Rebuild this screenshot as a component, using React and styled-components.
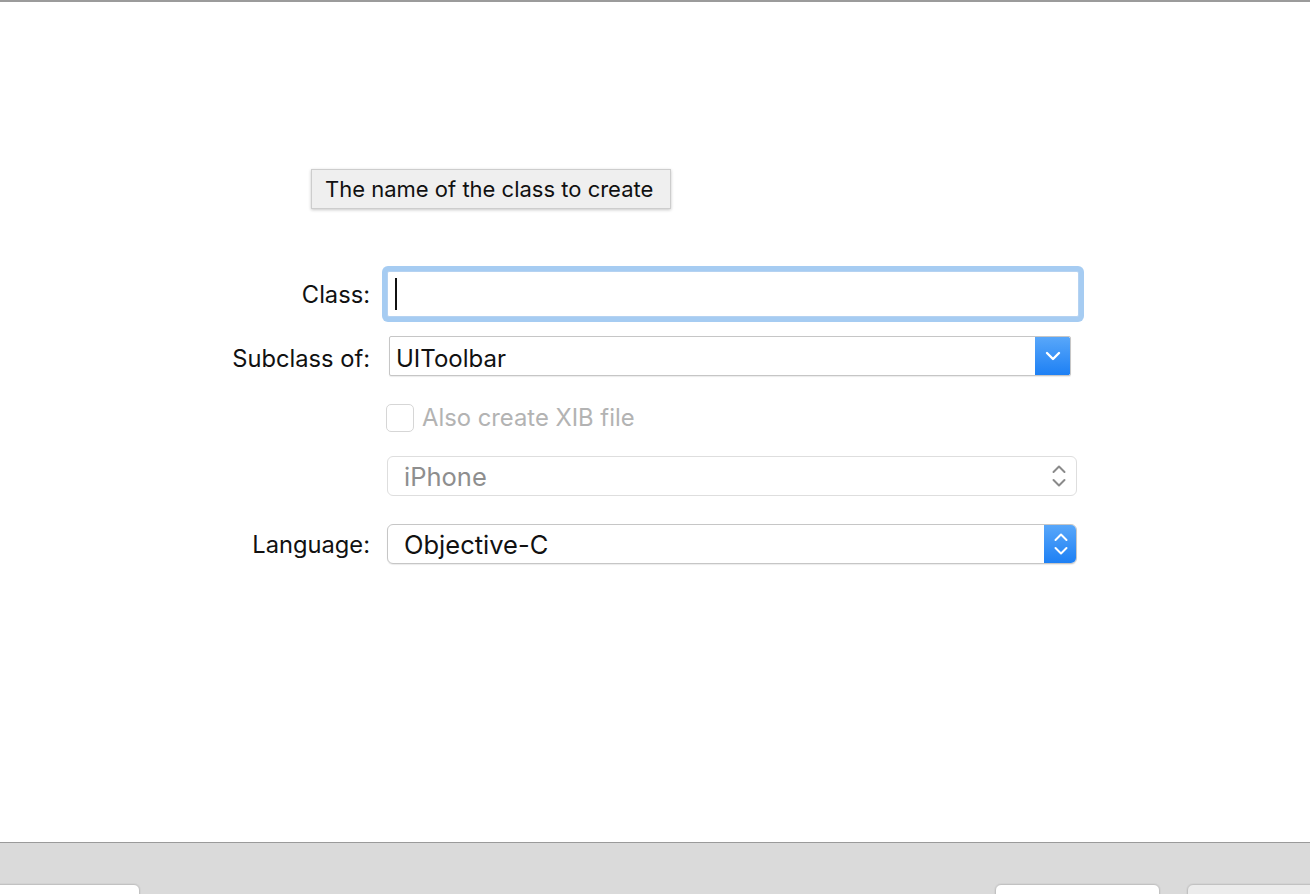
import React from "react";
import styled, { createGlobalStyle } from "styled-components";

const Global = createGlobalStyle`
  html, body { margin: 0; padding: 0; background: #fff; }
  body { font-family: Inter, "Helvetica Neue", "Liberation Sans", sans-serif; -webkit-font-smoothing: antialiased; }
  * { box-sizing: border-box; }
`;

const Page = styled.div`
  width: 1310px;
  height: 894px;
  display: flex;
  flex-direction: column;
  border-top: 2px solid #9b9b9b;
  overflow: hidden;
`;

const Main = styled.div`
  position: relative;
  flex: 1;
  padding-top: 264px;
  display: flex;
  flex-direction: column;
`;

const Tooltip = styled.div`
  position: absolute;
  left: 311px;
  top: 167px;
  width: 360px;
  height: 40px;
  background: #efefef;
  border: 1px solid #cdcdcd;
  box-shadow: 0 1px 3px rgba(0, 0, 0, 0.22);
  display: flex;
  align-items: center;
  padding-left: 13px;
  font-size: 22px;
  color: #111;
`;

const Row = styled.div`
  display: grid;
  grid-template-columns: 370px auto;
  align-items: center;
  margin-top: ${(p) => p.$mt || 0}px;
  height: ${(p) => p.$h}px;
`;

const Label = styled.label`
  text-align: right;
  font-size: 23.7px;
  color: #111;
  padding-top: ${(p) => p.$dy || 0}px;
`;

const Cell = styled.div`
  padding-left: ${(p) => p.$pl}px;
  display: flex;
  align-items: center;
`;

const TextField = styled.div`
  width: 692px;
  height: 46px;
  border: 1px solid #b5d2f1;
  border-radius: 2px;
  background: #fff;
  box-shadow: 0 0 0 5px #a6ccf2;
  display: flex;
  align-items: center;
  padding-left: 7px;
`;

const Caret = styled.span`
  display: block;
  width: 2px;
  height: 32px;
  background: #111;
`;

const Combo = styled.div`
  width: ${(p) => p.$w}px;
  height: 40px;
  display: flex;
  align-items: stretch;
  border: 1px solid ${(p) => (p.$disabled ? "#dedede" : "#c6c6c6")};
  border-radius: ${(p) => p.$radius}px;
  background: #fff;
  box-shadow: ${(p) => (p.$disabled ? "none" : "0 1px 1px rgba(0,0,0,0.08)")};
  overflow: hidden;
`;

const ComboText = styled.div`
  flex: 1;
  display: flex;
  align-items: center;
  padding-left: ${(p) => p.$pl}px;
  padding-top: ${(p) => p.$dy || 0}px;
  font-size: ${(p) => p.$fs}px;
  color: ${(p) => (p.$disabled ? "#8e8e8e" : "#111")};
`;

const BlueButton = styled.div`
  width: ${(p) => p.$w}px;
  margin: -1px -1px -1px 0;
  background: linear-gradient(#5aa8fa, #1c7ff4);
  border-radius: 0 ${(p) => p.$r}px ${(p) => p.$r}px 0;
  display: flex;
  align-items: center;
  justify-content: center;
`;

const GrayArrows = styled.div`
  width: 34px;
  display: flex;
  align-items: center;
  justify-content: center;
`;

const Check = styled.span`
  width: 28px;
  height: 28px;
  border: 1px solid #d6d6d6;
  border-radius: 5px;
  background: #fff;
  display: block;
`;

const CheckText = styled.span`
  margin-left: 8px;
  font-size: 23.8px;
  color: #b3b3b3;
`;

const Footer = styled.div`
  height: 52px;
  border-top: 1px solid #9a9a9a;
  background: #dadada;
  display: flex;
  justify-content: space-between;
  align-items: flex-start;
  padding-top: 41px;
  overflow: hidden;
`;

const FooterGroup = styled.div`
  display: flex;
  gap: 27px;
  margin-right: ${(p) => p.$mr || 0}px;
  margin-left: ${(p) => p.$ml || 0}px;
`;

const FooterButton = styled.div`
  width: ${(p) => p.$w}px;
  height: 30px;
  border-radius: 6px;
  border: 1px solid #c2c2c2;
  background: ${(p) => (p.$gray ? "#ececec" : "#fff")};
  box-shadow: 0 0 0 1px rgba(0,0,0,0.03);
`;

const ChevronDown = () => (
  <svg width="16" height="10" viewBox="0 0 16 10">
    <path d="M2 2 L8 8 L14 2" fill="none" stroke="#fff" strokeWidth="2.4" strokeLinecap="round" strokeLinejoin="round" />
  </svg>
);

const UpDown = ({ color }) => (
  <svg width="16" height="26" viewBox="0 0 16 26">
    <path d="M2.5 9 L8 3.5 L13.5 9" fill="none" stroke={color} strokeWidth="2" strokeLinecap="round" strokeLinejoin="round" />
    <path d="M2.5 17 L8 22.5 L13.5 17" fill="none" stroke={color} strokeWidth="2" strokeLinecap="round" strokeLinejoin="round" />
  </svg>
);

export default function App() {
  return (
    <>
      <Global />
      <Page>
        <Main>
          <Tooltip>The name of the class to create</Tooltip>
          <Row $h={56}>
            <Label>Class:</Label>
            <Cell $pl={17}>
              <TextField>
                <Caret />
              </TextField>
            </Cell>
          </Row>
          <Row $h={40} $mt={14}>
            <Label $dy={5}>Subclass of:</Label>
            <Cell $pl={19}>
              <Combo $w={682} $radius={2}>
                <ComboText $pl={6} $fs={24} $dy={4}>UIToolbar</ComboText>
                <BlueButton $w={36} $r={5}>
                  <ChevronDown />
                </BlueButton>
              </Combo>
            </Cell>
          </Row>
          <Row $h={28} $mt={27}>
            <span />
            <Cell $pl={16}>
              <Check />
              <CheckText>Also create XIB file</CheckText>
            </Cell>
          </Row>
          <Row $h={40} $mt={25}>
            <span />
            <Cell $pl={17}>
              <Combo $w={690} $radius={6} $disabled>
                <ComboText $pl={16} $fs={25.5} $disabled>iPhone</ComboText>
                <GrayArrows>
                  <UpDown color="#8a8a8a" />
                </GrayArrows>
              </Combo>
            </Cell>
          </Row>
          <Row $h={40} $mt={28}>
            <Label>Language:</Label>
            <Cell $pl={17}>
              <Combo $w={690} $radius={6}>
                <ComboText $pl={16} $fs={25.5}>Objective-C</ComboText>
                <BlueButton $w={33} $r={6}>
                  <UpDown color="#fff" />
                </BlueButton>
              </Combo>
            </Cell>
          </Row>
        </Main>
        <Footer>
          <FooterGroup $ml={-20}>
            <FooterButton $w={160} />
          </FooterGroup>
          <FooterGroup $mr={-30}>
            <FooterButton $w={165} />
            <FooterButton $w={153} $gray />
          </FooterGroup>
        </Footer>
      </Page>
    </>
  );
}
